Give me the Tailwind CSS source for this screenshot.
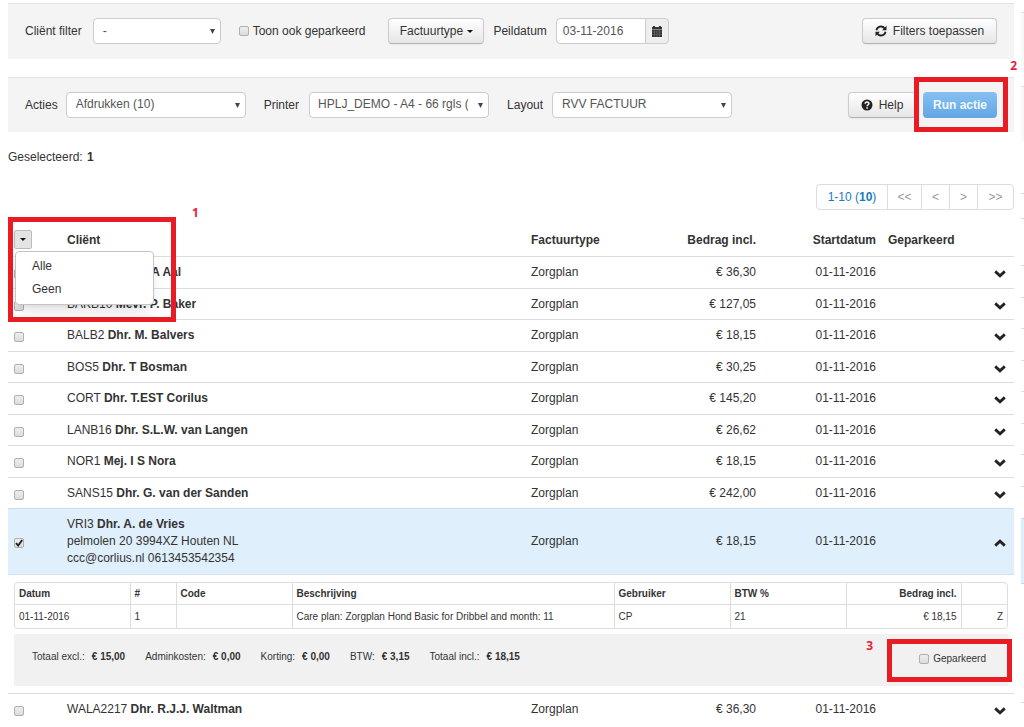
<!DOCTYPE html>
<html lang="nl">
<head>
<meta charset="utf-8">
<title>Facturen</title>
<script src="https://cdn.jsdelivr.net/npm/@tailwindcss/browser@4"></script>
</head>
<body class="bg-white font-['Liberation_Sans',Arial,sans-serif] text-xs text-[#333]">
<svg class="hidden" aria-hidden="true">
  <symbol id="down" viewBox="0 0 12 8"><path d="M1.2 1.4 6 5.8l4.800-4.400" fill="none" stroke="#222" stroke-width="2.800"/></symbol>
  <symbol id="up" viewBox="0 0 12 8"><path d="M1.200 6.600 6 2.200l4.800 4.400" fill="none" stroke="#222" stroke-width="2.800"/></symbol>
  <symbol id="caret" viewBox="0 0 6 6"><path d="M0 0h6L3 6z" fill="#444"/></symbol>
</svg>
<div class="flex gap-[7px] pl-2 h-screen overflow-hidden">
<main class="min-w-0 flex-1 pt-[3px]">

  <form class="flex items-center border-t border-[#e2e2e2] bg-[#f4f4f4] pt-[14px] pb-[15px] pr-[17px] pl-[17px]">
    <label for="filter">Cliënt filter</label>
    <span class="relative ml-[11px] w-32">
      <select id="filter" class="block h-[26px] w-full appearance-none rounded border border-[#ccc] bg-white pr-5 pl-[9px] text-[#555]"><option>-</option></select>
      <svg class="pointer-events-none absolute top-[11px] right-[6px] size-[5px]"><use href="#caret"/></svg>
    </span>
    <label class="ml-[18px] flex items-center gap-1"><input type="checkbox" class="size-[10px] appearance-none rounded-[2px] border border-[#b0b0b0] bg-linear-to-b from-[#eee] to-[#dcdcdc]">Toon ook geparkeerd</label>
    <button type="button" class="ml-[23px] flex h-[26px] w-24 items-center justify-center gap-1 rounded border border-[#ccc] border-b-[#b3b3b3] bg-linear-to-b from-white to-[#e6e6e6] shadow-xs">Factuurtype
      <svg class="h-[3px] w-[6px]" viewBox="0 0 6 3"><path d="M0 0h6L3 3z" fill="#111"/></svg></button>
    <label for="peil" class="ml-[9px]">Peildatum</label>
    <span class="ml-[9px] flex h-[26px]">
      <input id="peil" type="text" value="03-11-2016" class="w-[90px] rounded-l border border-[#ccc] bg-white px-[6px] text-[#555]">
      <button type="button" aria-label="Kalender" class="-ml-px flex w-6 items-center justify-center rounded-r border border-[#ccc] bg-[#eee]">
        <svg class="size-3" viewBox="0 0 12 12"><path d="M1 2h1V1h2v1h4V1h2v1h1v10H1z" fill="#333"/><path d="M1 4.500h10" stroke="#aaa" stroke-width=".7"/><path d="M1 7h10M1 9.500h10M3.500 4.500V12M6 4.500V12M8.500 4.500V12" stroke="#888" stroke-width=".4"/></svg>
      </button>
    </span>
    <button type="button" class="ml-auto flex h-[26px] w-[135px] items-center justify-center gap-[6px] rounded border border-[#ccc] border-b-[#b3b3b3] bg-linear-to-b from-white to-[#e6e6e6] shadow-xs">
      <svg class="size-3" viewBox="0 0 12 12"><g fill="none" stroke="#222" stroke-width="1.800"><path d="M1.400 5.200A4.600 4.600 0 0 1 9.600 3.400M10.600 6.800A4.600 4.600 0 0 1 2.400 8.600"/></g><path d="M11.500.8v4.400H7.100zM.5 11.200V6.800h4.400z" fill="#222"/></svg>
      Filters toepassen</button>
  </form>

  <form class="relative mt-[18px] flex items-center border-t border-[#e2e2e2] bg-[#f4f4f4] pt-[14px] pb-[14px] pr-[17px] pl-[17px]">
    <label for="acties">Acties</label>
    <span class="relative ml-2 w-[180px]">
      <select id="acties" class="block h-[26px] w-full appearance-none rounded border border-[#ccc] bg-white pr-5 pb-[2px] pl-[9px] text-[#555]"><option>Afdrukken (10)</option></select>
      <svg class="pointer-events-none absolute top-[11px] right-[6px] size-[5px]"><use href="#caret"/></svg>
    </span>
    <label for="printer" class="ml-[18px]">Printer</label>
    <span class="relative ml-[10px] w-[180px]">
      <select id="printer" class="block h-[26px] w-full appearance-none rounded border border-[#ccc] bg-white pr-5 pb-[2px] pl-2 text-[#555]"><option>HPLJ_DEMO - A4 - 66 rgls (</option></select>
      <svg class="pointer-events-none absolute top-[11px] right-[6px] size-[5px]"><use href="#caret"/></svg>
    </span>
    <label for="layout" class="ml-[18px]">Layout</label>
    <span class="relative ml-[9px] w-[180px]">
      <select id="layout" class="block h-[26px] w-full appearance-none rounded border border-[#ccc] bg-white pr-5 pb-[2px] pl-[9px] text-[#555]"><option>RVV FACTUUR</option></select>
      <svg class="pointer-events-none absolute top-[11px] right-[6px] size-[5px]"><use href="#caret"/></svg>
    </span>
    <button type="button" class="ml-auto flex h-[26px] w-[68px] items-center justify-center gap-[6px] rounded border border-[#ccc] border-b-[#b3b3b3] bg-linear-to-b from-white to-[#e6e6e6] shadow-xs">
      <svg class="size-3" viewBox="0 0 12 12"><circle cx="6" cy="6" r="5.500" fill="#222"/><path d="M4.200 4.700C4.200 2.400 7.900 2.400 7.900 4.600 7.900 5.900 6.100 5.900 6.100 7.300M6.100 8.200v1.500" fill="none" stroke="#fff" stroke-width="1.500"/></svg>
      Help</button>
    <button type="button" class="ml-[7px] h-[26px] w-[74px] rounded bg-linear-to-b from-[#85c0f2] to-[#62a6e3] font-bold text-white/90">Run actie</button>
    <div class="pointer-events-none absolute -top-px right-[6px] h-[55px] w-[94px] border-5 border-[#e91c24]"></div>
    <span class="absolute -top-5 -right-[3px] font-['Open_Sans',sans-serif] font-bold text-[#e8203a]">2</span>
  </form>

  <p class="mt-[17px] leading-4">Geselecteerd: <b class="ml-px">1</b></p>

  <nav class="mt-[19px] ml-auto flex h-[26px] w-[198px] divide-x divide-[#ddd] rounded border border-[#ddd] text-center leading-6 text-[#999]">
    <a href="#" class="w-[71px] text-[#1a7bc0]">1-10 (<b>10</b>)</a>
    <a href="#" class="w-[34px]">&lt;&lt;</a>
    <a href="#" class="w-[28px]">&lt;</a>
    <a href="#" class="w-[28px]">&gt;</a>
    <a href="#" class="w-[35px]">&gt;&gt;</a>
  </nav>

  <div class="relative mt-[14px]">
    <table class="w-full table-fixed border-collapse">
      <colgroup><col class="w-[53px]"><col><col class="w-[116px]"><col class="w-[121px]"><col class="w-[120px]"><col class="w-[90px]"><col class="w-[42px]"></colgroup>
      <thead>
        <tr class="h-8 text-left">
          <th class="p-0 pl-[6px]"><button type="button" aria-label="Selectie" class="flex h-[19px] w-[18px] items-center justify-center rounded-[2px] border border-[#bbb] bg-[#e4e4e4]"><svg class="h-[3px] w-[6px]" viewBox="0 0 6 3"><path d="M0 0h6L3 3z" fill="#111"/></svg></button></th>
          <th class="px-[6px] py-0">Cliënt</th><th class="px-[6px] py-0">Factuurtype</th><th class="px-[6px] py-0 text-right">Bedrag incl.</th><th class="px-[6px] py-0 text-right">Startdatum</th><th class="px-[6px] py-0">Geparkeerd</th><th class="p-0"></th>
        </tr>
      </thead>
      <tbody id="rows"></tbody>
    </table>

    <ul class="absolute top-[27px] left-[7px] w-[139px] rounded border border-[#c4c4c4] bg-white py-[3px] shadow-lg">
      <li><a href="#" class="block pl-4 leading-[23px]">Alle</a></li>
      <li><a href="#" class="block pl-4 leading-[23px]">Geen</a></li>
    </ul>
    <div class="pointer-events-none absolute -top-[7px] left-0 h-[105px] w-[168px] border-5 border-[#e91c24]"></div>
    <span class="absolute -top-[19px] left-[184px] font-['Open_Sans',sans-serif] font-bold text-[#e8203a]">1</span>
  </div>
</main>

<!-- Left edge of the neighbouring panel -->
<aside class="flex w-[3px] flex-col" aria-hidden="true">
  <div class="mt-3 h-[54px] border-t border-[#e2e2e2] bg-[#f8f8f8]"></div>
  <div class="mt-5 h-[55px] border-t border-[#e2e2e2] bg-[#f8f8f8]"></div>
  <div class="mt-[52px] h-[26px] border-y border-[#ddd]"></div>
  <div class="mt-[46px] grid h-[253px] grid-rows-8 divide-y divide-[#ddd] border-t border-[#ddd]"><i></i><i></i><i></i><i></i><i></i><i></i><i></i><i></i></div>
  <div class="h-[66px] border-y border-[#c5dcec] bg-[#dfeffb]"></div>
  <div class="mt-[118px] border-t border-[#ddd]"></div>
</aside>
</div>

<script>
const rows = [
  ['ABBM10', 'Mevr. A Aal', '36,30'],
  ['BAKB10', 'Mevr. P. Baker', '127,05'],
  ['BALB2', 'Dhr. M. Balvers', '18,15'],
  ['BOS5', 'Dhr. T Bosman', '30,25'],
  ['CORT', 'Dhr. T.EST Corilus', '145,20'],
  ['LANB16', 'Dhr. S.L.W. van Langen', '26,62'],
  ['NOR1', 'Mej. I S Nora', '18,15'],
  ['SANS15', 'Dhr. G. van der Sanden', '242,00'],
  ['VRI3', 'Dhr. A. de Vries', '18,15', 'pelmolen 20 3994XZ Houten NL<br>ccc@corlius.nl 0613453542354'],
  ['WALA2217', 'Dhr. R.J.J. Waltman', '36,30'],
];
const detail = `
<tr class="border-t border-[#d5e3ee]"><td colspan="7" class="px-[6px] pt-[7px] pb-[7px]">
  <div class="overflow-hidden rounded border border-[#ddd]">
  <table class="w-full table-fixed border-collapse text-[10px]">
    <colgroup><col class="w-[115px]"><col class="w-[46px]"><col class="w-[116px]"><col><col class="w-[116px]"><col class="w-[116px]"><col class="w-[115px]"><col class="w-[46px]"></colgroup>
    <tr class="h-[22px] divide-x divide-[#ddd] text-left"><th class="px-1 py-0">Datum</th><th class="px-1 py-0">#</th><th class="px-1 py-0">Code</th><th class="px-1 py-0">Beschrijving</th><th class="px-1 py-0">Gebruiker</th><th class="px-1 py-0">BTW %</th><th class="px-1 py-0 text-right">Bedrag incl.</th><th class="p-0"></th></tr>
    <tr class="h-[23px] divide-x divide-[#ddd] border-t border-[#ddd]"><td class="px-1 py-0">01-11-2016</td><td class="px-1 py-0">1</td><td class="p-0"></td><td class="px-1 py-0">Care plan: Zorgplan Hond Basic for Dribbel and month: 11</td><td class="px-1 py-0">CP</td><td class="px-1 py-0">21</td><td class="px-1 py-0 text-right">€ 18,15</td><td class="px-1 py-0 text-right">Z</td></tr>
  </table>
  </div>
  <div class="relative mt-[5px] flex h-[52px] items-start bg-[#f1f1f1] pt-[15px] pr-[22px] pl-[18px] text-[10px] leading-4">
    <dl class="flex gap-5">
      <div class="flex gap-[7px]"><dt>Totaal excl.:</dt><dd class="font-bold">€ 15,00</dd></div>
      <div class="flex gap-[7px]"><dt>Adminkosten:</dt><dd class="font-bold">€ 0,00</dd></div>
      <div class="flex gap-[7px]"><dt>Korting:</dt><dd class="font-bold">€ 0,00</dd></div>
      <div class="flex gap-[7px]"><dt>BTW:</dt><dd class="font-bold">€ 3,15</dd></div>
      <div class="flex gap-[7px]"><dt>Totaal incl.:</dt><dd class="font-bold">€ 18,15</dd></div>
    </dl>
    <label class="mt-[2px] ml-auto flex items-center gap-1"><input type="checkbox" class="size-[10px] appearance-none rounded-[2px] border border-[#b0b0b0] bg-linear-to-b from-[#eee] to-[#dcdcdc]">Geparkeerd</label>
    <div class="pointer-events-none absolute top-[5px] -right-1 h-[43px] w-[125px] border-5 border-[#e91c24]"></div>
    <span class="absolute top-1 right-[135px] font-['Open_Sans',sans-serif] text-xs font-bold text-[#e8203a]">3</span>
  </div>
</td></tr>`;
document.getElementById('rows').innerHTML = rows.map(([code, name, amount, extra]) => `
<tr class="${extra ? 'h-[66px] border-t border-[#c5dcec] bg-[#dfeffb] leading-[17px]' : 'h-8 border-t border-[#ddd] even:h-[31px]'}">
  <td class="p-0 pt-1 pl-[6px]"><span class="relative block size-[10px]"><input type="checkbox" aria-label="${name}" ${extra ? 'checked' : ''} class="block size-[10px] appearance-none rounded-[2px] border border-[#b0b0b0] bg-linear-to-b from-[#eee] to-[#dcdcdc]">${extra ? '<svg class="pointer-events-none absolute top-0 left-0 size-[10px]" viewBox="0 0 10 10"><path d="M2 5.200 4.200 7.500 8.200 2" fill="none" stroke="#222" stroke-width="1.900"/></svg>' : ''}</span></td>
  <td class="px-[6px] py-0">${code} <b>${name}</b>${extra ? '<br>' + extra : ''}</td>
  <td class="px-[6px] py-0">Zorgplan</td>
  <td class="px-[6px] py-0 text-right">€ ${amount}</td>
  <td class="px-[6px] py-0 text-right">01-11-2016</td>
  <td class="p-0"></td>
  <td class="p-0 pt-1 pl-[22px]"><button type="button" aria-label="Details" class="block"><svg class="h-2 w-3"><use href="${extra ? '#up' : '#down'}"/></svg></button></td>
</tr>${extra ? detail : ''}`).join('');
</script>
</body>
</html>
